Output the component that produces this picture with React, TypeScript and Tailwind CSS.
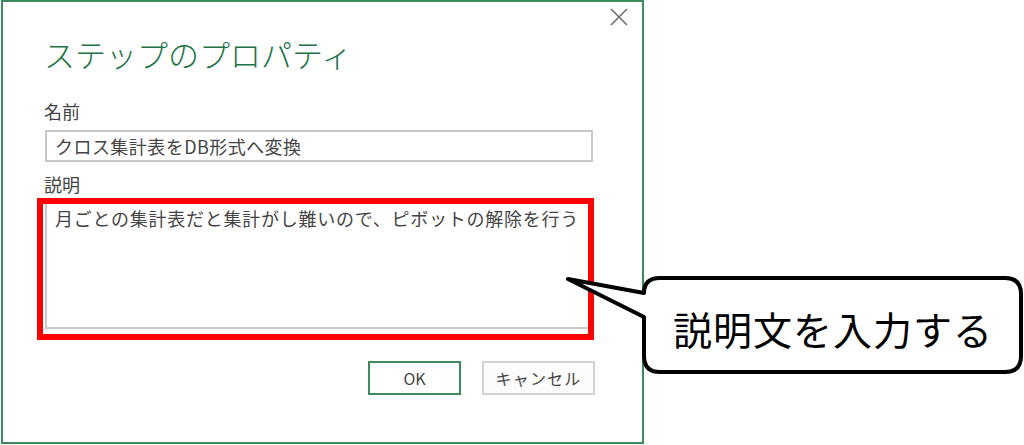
const jp = { fontFamily: '"Noto Sans CJK JP", "Noto Sans", sans-serif' };

const CloseIcon = () => (
    <svg width="18" height="18" viewBox="0 0 18 18" className="block">
        <path d="M1 1 L17 17 M17 1 L1 17" stroke="#6e6e6e" strokeWidth="1.6" fill="none" />
    </svg>
);

const Callout = () => (
    <>
        <svg
            className="absolute left-[560px] top-[268px]"
            width="464"
            height="112"
            viewBox="560 268 464 112"
        >
            <path
                d="M660 278 H1005 Q1021 278 1021 294 V356 Q1021 372 1005 372 H660 Q644 372 644 356 V317 L568 279 L644 293 Q644 278 660 278 Z"
                fill="#ffffff"
                stroke="#000000"
                strokeWidth="4"
                strokeLinejoin="round"
            />
        </svg>
        <div
            className="absolute left-[642px] top-[276px] w-[381px] h-[98px] flex items-center pl-[31px] pt-[6px] text-[39px] leading-none tracking-[1px] text-black"
            style={jp}
        >
            説明文を入力する
        </div>
    </>
);

const App = () => {
    return (
        <div className="relative w-[1024px] h-[445px] bg-white overflow-hidden" style={jp}>
            <div className="ml-[1px] w-[643px] h-[444px] border-2 border-[#3d8a5e] bg-white flex flex-col">
                <div className="flex justify-end pt-[6px] pr-[14px]">
                    <CloseIcon />
                </div>

                <div className="pl-[41px] flex flex-col">
                    <h1 className="mt-[10px] text-[31px] leading-[36px] font-light text-[#217346]">
                        ステップのプロパティ
                    </h1>

                    <label className="mt-[27px] text-[18px] leading-[24px] text-[#444]">名前</label>
                    <div className="mt-[7px] ml-[1px] w-[548px] h-[32px] border-2 border-[#c8c8c8] flex items-center pl-[8px] text-[18px] tracking-[0.45px] text-[#444]">
                        クロス集計表をDB形式へ変換
                    </div>

                    <label className="mt-[10px] text-[18px] leading-[24px] text-[#444]">説明</label>
                    <div className="mt-[5px] ml-[1px] w-[546px] h-[128px] border-2 border-[#c8c8c8] pl-[8px] pt-[2px] text-[18px] leading-[26px] tracking-[0.75px] text-[#444]">
                        月ごとの集計表だと集計がし難いので、ピボットの解除を行う
                    </div>

                    <div className="mt-[32px] w-[551px] flex justify-end gap-[21px]">
                        <button className="w-[93px] h-[34px] border-2 border-[#3d8a5e] bg-white text-[16px] text-[#444]">
                            OK
                        </button>
                        <button className="w-[113px] h-[34px] border-2 border-[#d2d2d2] bg-[#fcfcfc] text-[16px] tracking-[1.2px] text-[#444]">
                            キャンセル
                        </button>
                    </div>
                </div>
            </div>

            {/* red highlight around the description box */}
            <div className="absolute left-[37px] top-[198px] w-[557px] h-[142px] border-[6px] border-[#ff0000]" />

            <Callout />
        </div>
    );
};

export default App;
